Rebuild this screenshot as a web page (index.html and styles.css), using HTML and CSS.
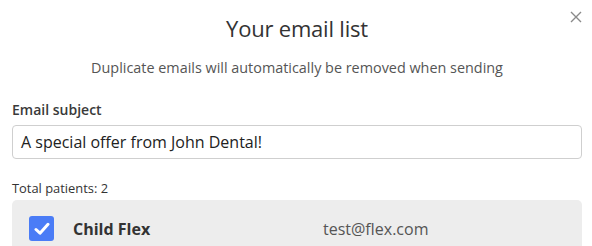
FILE: index.html
```html
<!DOCTYPE html>
<html>
<head>
<meta charset="utf-8">
<link rel="stylesheet" href="styles.css">
</head>
<body>
<div class="modal">
  <button class="close" aria-label="Close">
    <svg width="12" height="12" viewBox="0 0 12 12"><path d="M1 1L11 11M11 1L1 11" stroke="#8a8a8a" stroke-width="1.4" fill="none"/></svg>
  </button>
  <h1 class="title">Your email list</h1>
  <p class="subtitle">Duplicate emails will automatically be removed when sending</p>
  <label class="label">Email subject</label>
  <div class="input">A special offer from John Dental!</div>
  <div class="total">Total patients: 2</div>
  <div class="list">
    <div class="row">
      <span class="check">
        <svg width="16" height="14" viewBox="0 0 16 14"><path d="M2 7.5L6 11.2L14 2.3" stroke="#fff" stroke-width="3" fill="none" stroke-linecap="round" stroke-linejoin="round"/></svg>
      </span>
      <span class="name">Child Flex</span>
      <span class="email">test@flex.com</span>
    </div>
  </div>
</div>
</body>
</html>
```
FILE: styles.css
```css
html, body { margin: 0; padding: 0; background: #fff; }
body { font-family: "Open Sans", "Noto Sans", sans-serif; color: #333; }
.modal { position: relative; width: 592px; height: 246px; padding: 0 10px 0 12px; box-sizing: border-box; overflow: hidden; }
.close { position: absolute; top: 11px; right: 10px; background: none; border: 0; padding: 0; width: 12px; height: 12px; display: flex; }
.title { margin: 0; padding-top: 14px; text-align: center; font-size: 22px; font-weight: 500; color: #333; line-height: 28px; letter-spacing: -0.2px; }
.subtitle { margin: 0; padding-top: 16px; text-align: center; font-size: 14.4px; color: #555; line-height: 20px; }
.label { display: block; margin-top: 22px; font-size: 14px; font-weight: 600; color: #3a3a3a; line-height: 20px; }
.input { margin-top: 5px; height: 34px; box-sizing: border-box; border: 1px solid #cfcfcf; border-radius: 4px; padding: 0 8px; display: flex; align-items: center; font-size: 16px; color: #222; }
.total { margin-top: 20px; font-size: 12.9px; color: #333; line-height: 18px; }
.list { margin-top: 3px; background: #ededed; border-radius: 5px 5px 0 0; height: 60px; }
.row { display: flex; align-items: center; padding: 16px 0 0 17px; }
.check { width: 25px; height: 25px; background: #4a7cf6; border-radius: 3px; display: flex; align-items: center; justify-content: center; flex: none; }
.name { margin-left: 19px; width: 250px; font-size: 16px; font-weight: 700; color: #333; }
.email { font-size: 16px; color: #555; }
```
